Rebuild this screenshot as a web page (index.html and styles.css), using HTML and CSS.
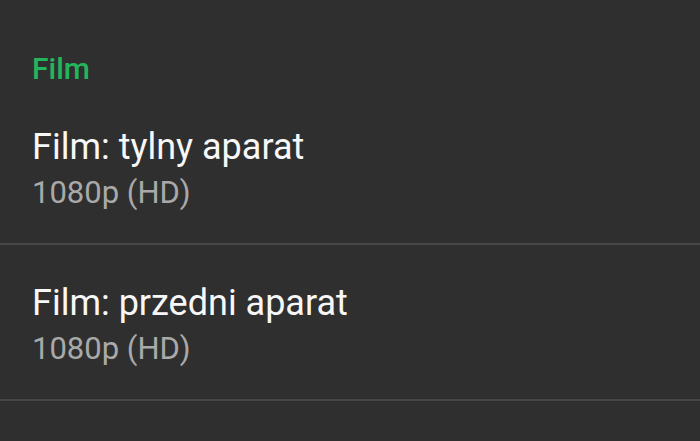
FILE: index.html
```html
<!DOCTYPE html>
<html lang="pl">
<head>
<meta charset="utf-8">
<link rel="stylesheet" href="styles.css">
</head>
<body>
<div class="settings">
  <div class="category">Film</div>
  <div class="pref">
    <div class="pref-title">Film: tylny aparat</div>
    <div class="pref-summary">1080p (HD)</div>
  </div>
  <div class="pref">
    <div class="pref-title">Film: przedni aparat</div>
    <div class="pref-summary">1080p (HD)</div>
  </div>
</div>
</body>
</html>
```
FILE: styles.css
```css
html, body {
  margin: 0;
  padding: 0;
  background: #2f2f2f;
  font-family: Roboto, "Noto Sans", sans-serif;
}
.settings {
  display: flex;
  flex-direction: column;
}
.category {
  padding: 49px 32px 0;
  font-size: 30px;
  line-height: 40px;
  font-weight: 500;
  color: #23b55b;
}
.pref {
  padding: 35px 32px 30px;
  border-bottom: 2px solid #464646;
}
.pref-title {
  font-size: 36px;
  line-height: 46px;
  color: #f7f7f7;
}
.pref-summary {
  margin-top: 3px;
  font-size: 31px;
  line-height: 40px;
  color: #a9a9a9;
}
```
